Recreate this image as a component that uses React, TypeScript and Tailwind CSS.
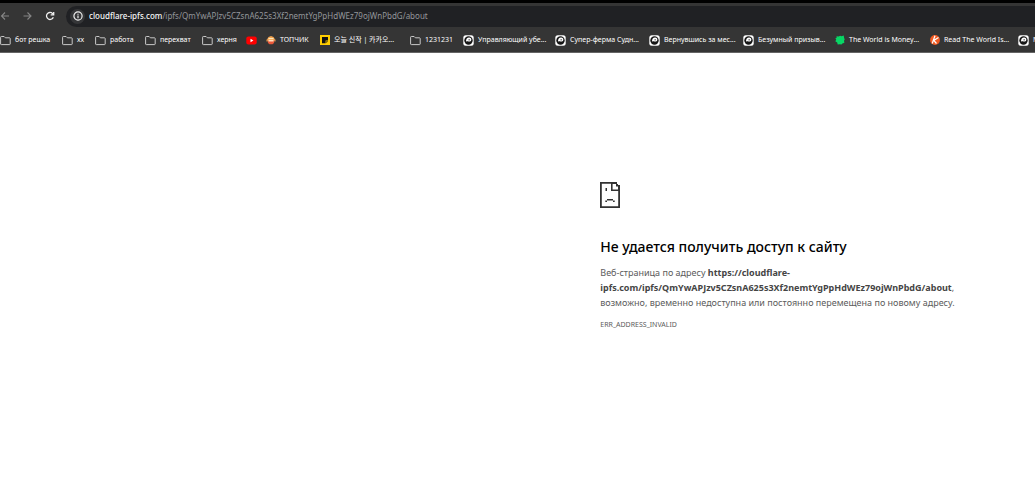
import type { ReactNode } from "react";

function FolderIcon() {
  return (
    <svg viewBox="0 0 11 11" className="h-[11px] w-[11px] shrink-0" fill="none" stroke="#c7c7c7" aria-hidden="true">
      <path d="M.6 9V2.200q0-.7.7-.7h2.800l1.300 1.300h4.100q.7 0 .7.7V9q0 .6-.7.6H1.300Q.6 9.600.6 9Z" />
    </svg>
  );
}

function VideoIcon() {
  return (
    <svg viewBox="0 0 11 11" className="h-[11px] w-[11px] shrink-0" aria-hidden="true">
      <rect x=".3" y="1.500" width="10.400" height="8" rx="2" fill="#f00" />
      <path d="M4.500 3.800v3.400L7.400 5.500Z" fill="#fff" />
    </svg>
  );
}

function FaceIcon() {
  return (
    <svg viewBox="0 0 10 10" className="h-[10px] w-[10px] shrink-0" aria-hidden="true">
      <path d="M1.500 5h7L8 8 6.500 9.300h-3L2 8Z" fill="#e9583a" />
      <path d="M1 4.500 2.500 2 5 1l2.500 1L9 4.500v1H1Z" fill="#f2a24e" />
      <path d="M2.500 3h5v1.200h-5Z" fill="#ffe9ba" />
      <path d="M2.500 5h5v1.500h-5Z" fill="#ffe0c0" />
      <path d="M.5 4.500h1v2h-1ZM8.500 4.500h1v2h-1Z" fill="#ee9f4d" />
    </svg>
  );
}

function PageIcon() {
  return (
    <svg viewBox="0 0 10 10" className="h-[10px] w-[10px] shrink-0" aria-hidden="true">
      <path d="M0 0h10v10H0Z" fill="#ffcd00" />
      <path d="M2 2h6v3.500H5.600V8.300H2Z" fill="#111" />
      <path d="M6.300 6.200H8L6.300 8Z" fill="#111" />
    </svg>
  );
}

function RoundIcon() {
  return (
    <svg viewBox="0 0 11 11" className="h-[11px] w-[11px] shrink-0" aria-hidden="true">
      <rect x=".3" y=".3" width="10.400" height="10.400" rx="2.500" fill="#fff" />
      <circle cx="5.500" cy="5.500" r="4.200" fill="#151515" />
      <path d="M3 6.800C2.800 4 4.200 2.500 6 2.500S8.600 3.700 8.300 5C8 6.500 6.500 6.800 5.400 6.400 4.500 6.200 3.500 6.200 3 6.800Z" fill="#fff" />
      <path d="M5 5 6.600 4v1.400Z" fill="#151515" />
    </svg>
  );
}

function GreenIcon() {
  return (
    <svg viewBox="0 0 10 10" className="h-[10px] w-[10px] shrink-0" aria-hidden="true">
      <path d="m1.500 1.200 2 .3L5.200.7l1.300.6L8.700.5l.4 2.300.6 1.600-.7 1.400.4 2-2 .6-.9 1.200-1.800-.4-2 .2-.5-1.800L.3 6.200l.9-1.500-.8-1.500 1.300-.4Z" fill="#08d665" />
    </svg>
  );
}

function OrangeIcon() {
  return (
    <svg viewBox="0 0 10 10" className="h-[10px] w-[10px] shrink-0" aria-hidden="true">
      <circle cx="5" cy="5" r="4.900" fill="#f05a22" />
      <path d="M5 .8 2.200 8.500M8.500 2.500 3.800 5.400 6.500 8.500" fill="none" stroke="#fff" strokeWidth="1.200" />
    </svg>
  );
}

type Bookmark = { label: string; icon: ReactNode; width: string; name?: string };

const bookmarks: Bookmark[] = [
  { label: "бот решка", icon: <FolderIcon />, width: "w-[62px]" },
  { label: "хх", icon: <FolderIcon />, width: "w-[33px]" },
  { label: "работа", icon: <FolderIcon />, width: "w-[50px]" },
  { label: "перехват", icon: <FolderIcon />, width: "w-[57px]" },
  { label: "херня", icon: <FolderIcon />, width: "w-[44px]" },
  { label: "", name: "YouTube", icon: <VideoIcon />, width: "w-[20px]" },
  { label: "ТОПЧИК", icon: <FaceIcon />, width: "w-[54px]" },
  { label: "오늘 신작 | 카카오...", icon: <PageIcon />, width: "w-[90px]" },
  { label: "1231231", icon: <FolderIcon />, width: "w-[53px]" },
  { label: "Управляющий убе...", icon: <RoundIcon />, width: "w-[92px]" },
  { label: "Супер-ферма Судн...", icon: <RoundIcon />, width: "w-[94px]" },
  { label: "Вернувшись за мес...", icon: <RoundIcon />, width: "w-[94px]" },
  { label: "Безумный призыв...", icon: <RoundIcon />, width: "w-[92px]" },
  { label: "The World is Money...", icon: <GreenIcon />, width: "w-[95px]" },
  { label: "Read The World Is...", icon: <OrangeIcon />, width: "w-[88px]" },
  { label: "М", icon: <RoundIcon />, width: "w-[92px]" },
];

function Toolbar() {
  return (
    <div className="flex h-6 items-center bg-[#353535]">
      <div className="flex w-[66px] shrink-0 items-center gap-3">
        <button aria-label="Назад" className="flex w-[10px] justify-center">
          <svg viewBox="0 0 10 10" className="h-[10px] w-[10px]" fill="none" stroke="#858585" strokeWidth="1.100">
            <path d="M9 5H1.500M5 1.500 1.500 5 5 8.500" />
          </svg>
        </button>
        <button aria-label="Вперёд" className="flex w-[10px] justify-center">
          <svg viewBox="0 0 10 10" className="h-[10px] w-[10px]" fill="none" stroke="#858585" strokeWidth="1.100">
            <path d="M1.500 5H9M5.500 1.500 9 5 5.500 8.500" />
          </svg>
        </button>
        <button aria-label="Обновить" className="flex w-[12px] justify-center">
          <svg viewBox="0 0 10 10" className="h-[10px] w-[10px]" fill="none" stroke="#f1f1f1" strokeWidth="1.300">
            <path d="M8.300 6.200A3.500 3.500 0 1 1 7.500 2.500L8.600 3.600" />
            <path d="M8.700.9v3H5.700" />
          </svg>
        </button>
      </div>
      <div className="flex h-[21px] min-w-0 flex-1 items-center gap-1 rounded-l-full bg-[#202124] pl-1">
        <button aria-label="Сведения о сайте" className="flex h-[15px] w-[15px] shrink-0 items-center justify-center rounded-full bg-[#353638]">
          <svg viewBox="0 0 10 10" className="h-[10px] w-[10px]" fill="none" stroke="#eee" strokeWidth="1.200">
            <circle cx="5" cy="5" r="4.100" />
            <path d="M5 4.500v2.700M5 2.700v1" />
          </svg>
        </button>
        <div
          role="textbox"
          aria-label="Адресная строка"
          tabIndex={0}
          className="truncate text-[8px] leading-4 text-[#94969a]"
        >
          <span className="font-medium text-[#f5f5f5]">cloudflare-ipfs.com</span>
          /ipfs/QmYwAPJzv5CZsnA625s3Xf2nemtYgPpHdWEz79ojWnPbdG/about
        </div>
      </div>
    </div>
  );
}

function BookmarksBar() {
  return (
    <nav aria-label="Закладки" className="flex h-[25px] items-center overflow-hidden border-b border-[#656565] bg-[#353535]">
      {bookmarks.map((item, index) => (
        <a
          key={index}
          href="#"
          aria-label={item.name}
          className={"flex shrink-0 items-center gap-1 whitespace-nowrap text-[7px] leading-3 text-white " + item.width}
        >
          {item.icon}
          {item.label}
        </a>
      ))}
    </nav>
  );
}

function SadPageIcon() {
  return (
    <svg viewBox="0 0 20 26" className="h-[26px] w-5" fill="#333" aria-hidden="true">
      <path fillRule="evenodd" d="M0 0h17v2h1v1h2v23H0ZM1.800 1.800v22.400h16.400V9H11V1.800ZM12.600 2v5.400H18V4.500h-2V2Z" />
      <path d="M5.500 6H7v3H5.500ZM7 17h6v1.500H7ZM5.300 18.500H7V20H5.300ZM13 18.500h1.700V20H13Z" />
    </svg>
  );
}

export default function App() {
  return (
    <div className="min-h-screen overflow-hidden bg-white font-['Noto_Sans','Noto_Sans_CJK_KR',sans-serif]">
      <header className="border-t-[3px] border-black bg-[#353535]">
        <div className="pt-px">
          <Toolbar />
          <BookmarksBar />
        </div>
      </header>
      <main className="ml-[58%] max-w-[360px] pt-[129px] text-[9px] leading-[15px] text-[#5c5c5c]">
        <SadPageIcon />
        <h1 className="mt-[29px] text-[14px] leading-5 font-medium text-black">
          Не удается получить доступ к сайту
        </h1>
        <p className="mt-2">
          Веб-страница по адресу{" "}
          <strong className="font-bold text-[#454545]">
            https://cloudflare-<wbr />ipfs.com/ipfs/QmYwAPJzv5CZsnA625s3Xf2nemtYgPpHdWEz79ojWnPbdG/about
          </strong>
          , возможно, временно недоступна или постоянно перемещена по новому адресу.
        </p>
        <p className="mt-[9px] text-[7px] leading-3">ERR_ADDRESS_INVALID</p>
      </main>
    </div>
  );
}
